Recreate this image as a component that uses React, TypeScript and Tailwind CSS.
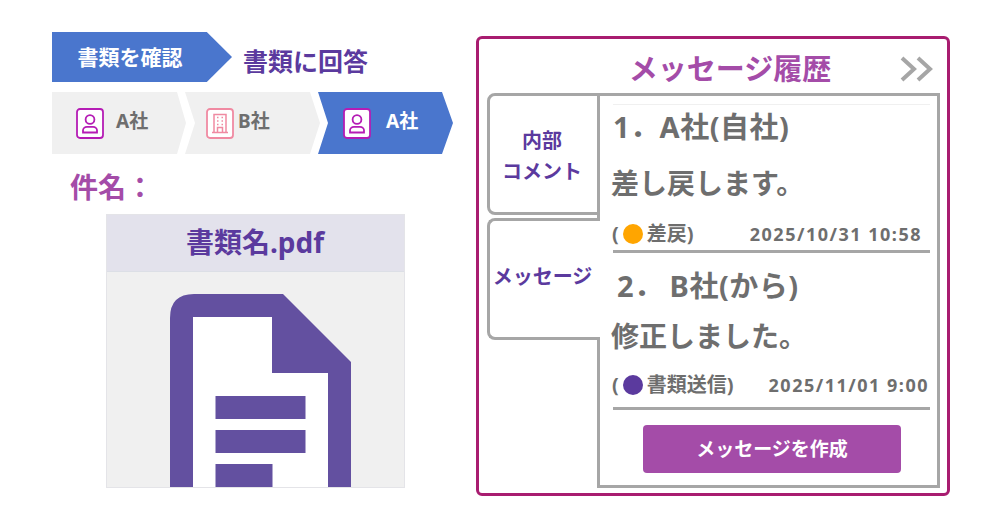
const font = { fontFamily: '"Noto Sans", "Noto Sans CJK JP", sans-serif' };

const PersonIcon = () => (
  <svg width="28" height="31" viewBox="0 0 28 31" className="shrink-0">
    <rect x="1" y="1" width="26" height="29" rx="3" fill="#fff" stroke="#b51cb5" strokeWidth="1.8" />
    <circle cx="14" cy="11.5" r="4.4" fill="none" stroke="#b51cb5" strokeWidth="1.8" />
    <path d="M7 24.5v-2.2c0-2 1.8-3.4 4-3.4h6c2.2 0 4 1.4 4 3.4v2.2z" fill="none" stroke="#b51cb5" strokeWidth="1.8" />
  </svg>
);

const BuildingIcon = () => (
  <svg width="28" height="31" viewBox="0 0 28 31" className="shrink-0">
    <rect x="1" y="1" width="26" height="29" rx="3" fill="#fff" stroke="#f08aa2" strokeWidth="1.8" />
    <path d="M8 24.5V6.5h12v18M6 24.5h16" fill="none" stroke="#f08aa2" strokeWidth="1.5" />
    <path d="M11 9.5h1.5M15.5 9.5H17M11 13h1.5M15.5 13H17M11 16.5h1.5M15.5 16.5H17M11.5 24v-4.5h5V24" fill="none" stroke="#f08aa2" strokeWidth="1.5" />
  </svg>
);

const DocIcon = () => (
  <svg width="181" height="193" viewBox="0 0 181 193" className="ml-[63px] mt-[22px] block">
    <path d="M23 23H102V79H158V193H23Z" fill="#fff" />
    <path d="M0 193V24Q0 0 24 0H113L181 68V193H158V79H102V23H23V193Z" fill="#6350a0" />
    <rect x="45.5" y="102" width="90" height="23" fill="#6350a0" />
    <rect x="45.5" y="136" width="90" height="23" fill="#6350a0" />
    <rect x="45.5" y="170" width="57" height="23" fill="#6350a0" />
  </svg>
);

const Meta = ({ dot, label, date, gap }: { dot: string; label: string; date: string; gap: string }) => (
  <div className={`flex items-center h-[24px] font-bold text-[#6e6e6e] ${gap}`}>
    <span className="flex items-center text-[20px] ml-[-1px]">
      (
      <span className={`inline-block w-[20px] h-[20px] rounded-full mx-[4px] ${dot}`} />
      {label})
    </span>
    <span className="ml-auto text-[18px] tracking-[1.5px]">{date}</span>
  </div>
);

export default function App() {
  return (
    <div style={font} className="flex w-[1000px] h-[518px] bg-white pl-[52px] pt-[32px] overflow-hidden">
      <div className="w-[401px] shrink-0">
        <div className="flex items-center h-[50px]">
          <div className="flex items-center justify-center w-[180px] h-[50px] pr-[24px] pt-[2px] bg-[#4a76cd] text-white font-bold text-[21px] [clip-path:polygon(0_0,86%_0,100%_50%,86%_100%,0_100%)]">
            書類を確認
          </div>
          <div className="ml-[11px] pt-[10px] text-[25px] font-bold text-[#5b3a9e]">書類に回答</div>
        </div>

        <div className="flex h-[62px] mt-[10px]">
          <div className="flex items-center w-[134px] pl-[24px] bg-[#f0f0f0] font-bold text-[#6e6e6e] text-[19px] [clip-path:polygon(0_0,125px_0,134px_50%,125px_100%,0_100%)]">
            <PersonIcon />
            <span className="ml-[12px] -mt-[4px]">A社</span>
          </div>
          <div className="flex items-center w-[135px] -ml-px pl-[21px] bg-[#f0f0f0] font-bold text-[#6e6e6e] text-[19px] [clip-path:polygon(0_0,125px_0,135px_50%,125px_100%,0_100%,10px_50%)]">
            <BuildingIcon />
            <span className="ml-[4px] -mt-[4px]">B社</span>
          </div>
          <div className="flex items-center w-[135px] -ml-[2px] pl-[25px] bg-[#4a76cd] font-bold text-white text-[19px] [clip-path:polygon(0_0,124px_0,135px_50%,124px_100%,0_100%,10px_50%)]">
            <PersonIcon />
            <span className="ml-[15px] -mt-[4px]">A社</span>
          </div>
        </div>

        <div className="h-[60px] pl-[18px] pt-[15px] text-[28px] leading-[36px] font-bold text-[#a44ca8]">件名：</div>

        <div className="ml-[54px] w-[299px] h-[274px] border border-[#e4e4e8] bg-[#f0f0f0] overflow-hidden">
          <div className="flex items-center justify-center h-[57px] pb-[3px] pr-[1px] bg-[#e3e2ec] border-b border-[#dcdfe6] text-[28px] font-bold text-[#5b3a9e]">
            書類名.pdf
          </div>
          <DocIcon />
        </div>
      </div>

      <div className="w-[474px] h-[460px] ml-[23px] mt-[4px] border-[3px] border-[#a81c70] rounded-md shrink-0 pl-[8px] flex flex-col">
        <div className="relative flex items-center justify-center h-[54px] pl-[26px] pt-[5px] text-[29px] font-bold text-[#a44ca8]">
          メッセージ履歴
          <svg width="34" height="28" viewBox="0 0 34 28" className="absolute right-[14px] top-[16px]">
            <path d="M3 3l12 11L3 25M19 3l12 11-12 11" fill="none" stroke="#a6a6a6" strokeWidth="4" />
          </svg>
        </div>

        <div className="flex">
          <div className="w-[113px] -mr-[3px] relative z-10 shrink-0">
            <div className="flex flex-col items-center justify-center h-[122px] pr-[3px] pt-[4px] border-[3px] border-[#a6a6a6] rounded-l-lg bg-white text-[#5b3a9e] font-bold">
              <div className="text-[20px] leading-[31px]">内部</div>
              <div className="text-[20px] leading-[31px]">コメント</div>
            </div>
            <div className="flex items-center justify-center h-[122px] mt-[3px] pr-[5px] border-[3px] border-r-0 border-[#a6a6a6] rounded-l-lg bg-white text-[20px] font-bold text-[#5b3a9e] pb-[4px]">
              メッセージ
            </div>
          </div>

          <div className="w-[343px] h-[395px] border-[3px] border-[#a6a6a6] pl-[13px] pr-[7px] pt-[8px] text-[#6e6e6e] font-bold shrink-0">
            <div className="border-t border-[#f0f0f0]" />
            <div className="h-[44px] flex items-center text-[29px] tracking-[0.5px]">1．A社(自社)</div>
            <div className="h-[68px] flex items-center text-[28px] -ml-[2px]">差し戻します。</div>
            <Meta dot="bg-[#ffa500]" label="差戻" date="2025/10/31 10:58" gap="pr-[8px] mt-[5px] mb-[4px]" />
            <div className="h-[3px] bg-[#a6a6a6]" />
            <div className="h-[66px] flex items-center text-[29px] tracking-[0.5px] pl-[4px]">
              2．<span className="ml-[6px]">B社(から)</span>
            </div>
            <div className="h-[34px] flex items-center text-[28px] -ml-[2px]">修正しました。</div>
            <Meta dot="bg-[#5b3a9e]" label="書類送信" date="2025/11/01 9:00" gap="pr-[1px] mt-[20px] mb-[10px]" />
            <div className="h-[3px] bg-[#a6a6a6]" />
            <div className="flex items-center justify-center w-[258px] h-[48px] ml-[30px] mt-[15px] rounded-sm bg-[#a44ca8] text-white text-[19px]">
              メッセージを作成
            </div>
          </div>
        </div>
      </div>
    </div>
  );
}
